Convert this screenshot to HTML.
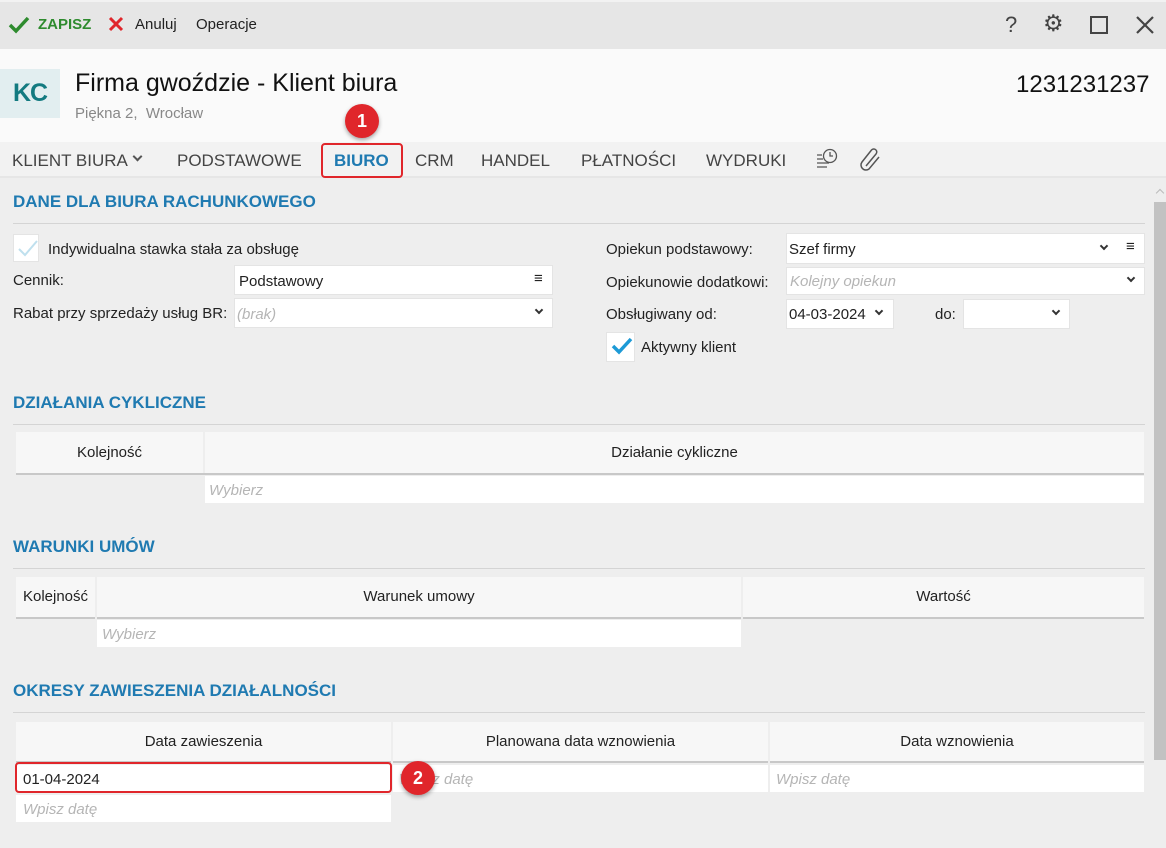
<!DOCTYPE html>
<html><head><meta charset="utf-8"><style>
*{box-sizing:border-box;margin:0;padding:0}
body{width:1166px;height:848px;overflow:hidden;background:#eeeeee;font-family:"Liberation Sans",sans-serif;font-size:15px;color:#222;position:relative}
.a{position:absolute}
.box{position:absolute;background:#fff;border:1px solid #e4e4e4}
.h{position:absolute;left:13px;color:#1f7ab1;font-weight:bold;font-size:17px}
.ln{position:absolute;left:13px;width:1132px;height:1px;background:#d4d4d4}
.th{position:absolute;background:#f7f7f7;border-bottom:2px solid #c8c8c8;text-align:center;font-size:15px;color:#222}
.ph{color:#b5b5b5;font-style:italic}
.chev{position:absolute;width:7px;height:7px;border-right:2px solid #333;border-bottom:2px solid #333;transform:rotate(45deg)}
.badge{position:absolute;width:34px;height:34px;border-radius:50%;background:#e0262b;color:#fff;font-weight:bold;font-size:18px;text-align:center;line-height:34px;box-shadow:0 2px 4px rgba(0,0,0,.35)}
</style></head><body>
<div class="a" style="left:0;top:0;width:1166px;height:49px;background:#e6e6e6;border-top:2px solid #f2f2f2"></div>
<svg class="a" style="left:8px;top:16px" width="22" height="18"><path d="M2 9 L8 15 L20 2" stroke="#2e8b2e" stroke-width="3.5" fill="none"/></svg>
<div class="a" style="left:38px;top:16px;color:#2e8b2e;font-weight:bold;font-size:15px">ZAPISZ</div>
<svg class="a" style="left:108px;top:16px" width="16" height="16"><path d="M2 2L14 14M14 2L2 14" stroke="#e0262b" stroke-width="3" fill="none"/></svg>
<div class="a" style="left:135px;top:16px">Anuluj</div>
<div class="a" style="left:196px;top:16px">Operacje</div>
<div class="a" style="left:1005px;top:12px;font-size:22px;color:#444">?</div>
<div class="a" style="left:1043px;top:10px;font-size:23px;color:#444">⚙</div>
<div class="a" style="left:1090px;top:16px;width:18px;height:18px;border:2.5px solid #444"></div>
<svg class="a" style="left:1136px;top:16px" width="18" height="18"><path d="M1 1L17 17M17 1L1 17" stroke="#444" stroke-width="2.2"/></svg>

<div class="a" style="left:0;top:49px;width:1166px;height:93px;background:#fafafa"></div>
<div class="a" style="left:0;top:69px;width:60px;height:49px;background:#e2eef0;color:#137a80;font-size:25px;font-weight:bold;text-align:center;line-height:49px;letter-spacing:-1px">KC</div>
<div class="a" style="left:75px;top:69px;font-size:25px;color:#111">Firma gwoździe - Klient biura</div>
<div class="a" style="left:75px;top:105px;font-size:15px;color:#888">Piękna 2,&nbsp; Wrocław</div>
<div class="a" style="left:1016px;top:71px;font-size:24px;color:#111">1231231237</div>

<div class="a" style="left:0;top:142px;width:1166px;height:36px;background:#f2f2f2;border-bottom:2px solid #e6e6e6"></div>
<div class="a" style="left:12px;top:151px;font-size:17px;color:#444">KLIENT BIURA</div>
<div class="chev" style="left:134px;top:153px;border-color:#555"></div>
<div class="a" style="left:177px;top:151px;font-size:17px;color:#444">PODSTAWOWE</div>
<div class="a" style="left:321px;top:143px;width:82px;height:35px;border:2px solid #e0262b;border-radius:4px"></div>
<div class="a" style="left:334px;top:151px;font-size:17px;color:#1f7ab1;font-weight:bold">BIURO</div>
<div class="a" style="left:415px;top:151px;font-size:17px;color:#444">CRM</div>
<div class="a" style="left:481px;top:151px;font-size:17px;color:#444">HANDEL</div>
<div class="a" style="left:581px;top:151px;font-size:17px;color:#444">PŁATNOŚCI</div>
<div class="a" style="left:706px;top:151px;font-size:17px;color:#444">WYDRUKI</div>
<svg class="a" style="left:814px;top:147px" width="26" height="24"><g stroke="#555" stroke-width="1.3" fill="none"><circle cx="16" cy="9" r="6.5"/><path d="M16 5v4h3M3 8h5M3 12h6M3 16h12M3 20h10"/></g></svg>
<svg class="a" style="left:858px;top:146px" width="26" height="26"><path d="M8 20 L18 8 a3 3 0 0 0 -4.5 -4 L4 16 a5 5 0 0 0 7 7 L21 11" stroke="#555" stroke-width="1.5" fill="none"/></svg>
<div class="badge" style="left:345px;top:104px">1</div>

<div class="a" style="left:1153px;top:180px;width:13px;height:668px;background:#eeeeee"></div>
<div class="a" style="left:1154px;top:202px;width:12px;height:558px;background:#c2c2c2"></div>
<div class="chev" style="left:1157px;top:190px;transform:rotate(225deg);border-color:#bbb;width:6px;height:6px;border-width:1.5px"></div>

<div class="h" style="top:192px">DANE DLA BIURA RACHUNKOWEGO</div>
<div class="ln" style="top:223px"></div>
<div class="box" style="left:13px;top:234px;width:26px;height:28px"></div>
<svg class="a" style="left:17px;top:238px" width="22" height="20"><path d="M2 11L8 17L20 3" stroke="#bfe0ee" stroke-width="2" fill="none"/></svg>
<div class="a" style="left:48px;top:241px">Indywidualna stawka stała za obsługę</div>
<div class="a" style="left:13px;top:272px">Cennik:</div>
<div class="box" style="left:234px;top:265px;width:319px;height:30px;padding:7px 4px">Podstawowy</div>
<div class="a" style="left:534px;top:270px;font-size:15px">≡</div>
<div class="a" style="left:13px;top:305px">Rabat przy sprzedaży usług BR:</div>
<div class="box ph" style="left:234px;top:298px;width:319px;height:30px;padding:7px 2px">(brak)</div>
<div class="chev" style="left:536px;top:307px;width:6px;height:6px"></div>

<div class="a" style="left:606px;top:241px">Opiekun podstawowy:</div>
<div class="box" style="left:786px;top:233px;width:359px;height:31px;padding:7px 2px">Szef firmy</div>
<div class="chev" style="left:1101px;top:243px;width:6px;height:6px"></div>
<div class="a" style="left:1126px;top:238px">≡</div>
<div class="a" style="left:606px;top:274px">Opiekunowie dodatkowi:</div>
<div class="box ph" style="left:786px;top:267px;width:359px;height:28px;padding:5px 3px">Kolejny opiekun</div>
<div class="chev" style="left:1128px;top:275px;width:6px;height:6px"></div>
<div class="a" style="left:606px;top:306px">Obsługiwany od:</div>
<div class="box" style="left:786px;top:299px;width:108px;height:30px;padding:6px 2px">04-03-2024</div>
<div class="chev" style="left:876px;top:308px;width:6px;height:6px"></div>
<div class="a" style="left:935px;top:306px">do:</div>
<div class="box" style="left:963px;top:299px;width:107px;height:30px"></div>
<div class="chev" style="left:1053px;top:308px;width:6px;height:6px"></div>
<div class="box" style="left:606px;top:332px;width:29px;height:30px"></div>
<svg class="a" style="left:611px;top:336px" width="22" height="20"><path d="M2 10L8 16L20 3" stroke="#1d9ad6" stroke-width="3.5" fill="none"/></svg>
<div class="a" style="left:641px;top:339px">Aktywny klient</div>

<div class="h" style="top:393px">DZIAŁANIA CYKLICZNE</div>
<div class="ln" style="top:424px"></div>
<div class="th" style="left:16px;top:432px;width:187px;height:43px;line-height:41px">Kolejność</div>
<div class="th" style="left:205px;top:432px;width:939px;height:43px;line-height:41px">Działanie cykliczne</div>
<div class="a" style="left:16px;top:473px;width:1128px;height:2px;background:#c8c8c8"></div>
<div class="a ph" style="left:205px;top:476px;width:939px;height:27px;background:#fff;padding:6px 4px">Wybierz</div>

<div class="h" style="top:537px">WARUNKI UMÓW</div>
<div class="ln" style="top:568px"></div>
<div class="th" style="left:16px;top:577px;width:79px;height:42px;line-height:40px">Kolejność</div>
<div class="th" style="left:97px;top:577px;width:644px;height:42px;line-height:40px">Warunek umowy</div>
<div class="th" style="left:743px;top:577px;width:401px;height:42px;line-height:40px">Wartość</div>
<div class="a ph" style="left:97px;top:620px;width:644px;height:27px;background:#fff;padding:6px 5px">Wybierz</div>

<div class="h" style="top:681px">OKRESY ZAWIESZENIA DZIAŁALNOŚCI</div>
<div class="ln" style="top:712px"></div>
<div class="th" style="left:16px;top:722px;width:375px;height:41px;line-height:40px">Data zawieszenia</div>
<div class="th" style="left:393px;top:722px;width:375px;height:41px;line-height:40px">Planowana data wznowienia</div>
<div class="th" style="left:770px;top:722px;width:374px;height:41px;line-height:40px">Data wznowienia</div>
<div class="a" style="left:16px;top:765px;width:375px;height:27px;background:#fff;padding:6px 7px">01-04-2024</div>
<div class="a ph" style="left:393px;top:765px;width:375px;height:27px;background:#fff;padding:6px 6px">Wpisz datę</div>
<div class="a ph" style="left:770px;top:765px;width:374px;height:27px;background:#fff;padding:6px 6px">Wpisz datę</div>
<div class="a ph" style="left:16px;top:795px;width:375px;height:27px;background:#fff;padding:6px 7px">Wpisz datę</div>
<div class="a" style="left:15px;top:762px;width:377px;height:31px;border:2px solid #e0262b;border-radius:4px"></div>
<div class="badge" style="left:401px;top:761px">2</div>
</body></html>
